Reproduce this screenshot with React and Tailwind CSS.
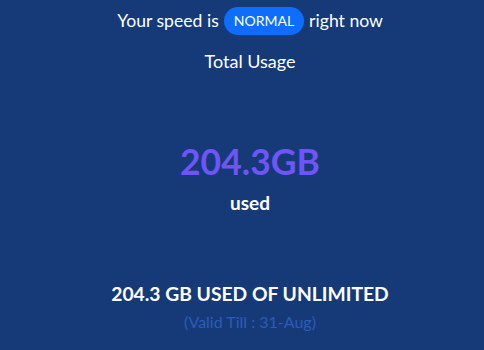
import React from "react";

export default function App() {
  return (
    <div
      className="w-[484px] h-[350px] bg-[#163a78] text-white flex flex-col items-center pl-[16px] overflow-hidden"
      style={{ fontFamily: "Lato, 'Liberation Sans', sans-serif" }}
    >
      {/* SPEED */}
      <div className="mt-[7px] flex items-center text-[17.6px] leading-[28px]">
        <span>Your speed is</span>
        <span className="mx-[5px] px-[10px] h-[28px] rounded-full bg-[#0d6efd] text-[14px] leading-[28px]">
          NORMAL
        </span>
        <span>right now</span>
      </div>

      <p className="mt-[14px] text-[18px] leading-[24px]">Total Usage</p>

      {/* USAGE */}
      <p className="mt-[67px] text-[35.5px] leading-[44px] font-bold text-[#6f55f5]">
        204.3GB
      </p>
      <p className="mt-[7px] text-[19px] leading-[24px] font-bold">used</p>

      <p className="mt-[67px] text-[19.3px] leading-[24px] font-bold">
        204.3 GB USED OF UNLIMITED
      </p>
      <p className="mt-[6px] text-[16px] leading-[20px] text-[#2b5cb8]">
        (Valid Till : 31-Aug)
      </p>
    </div>
  );
}
